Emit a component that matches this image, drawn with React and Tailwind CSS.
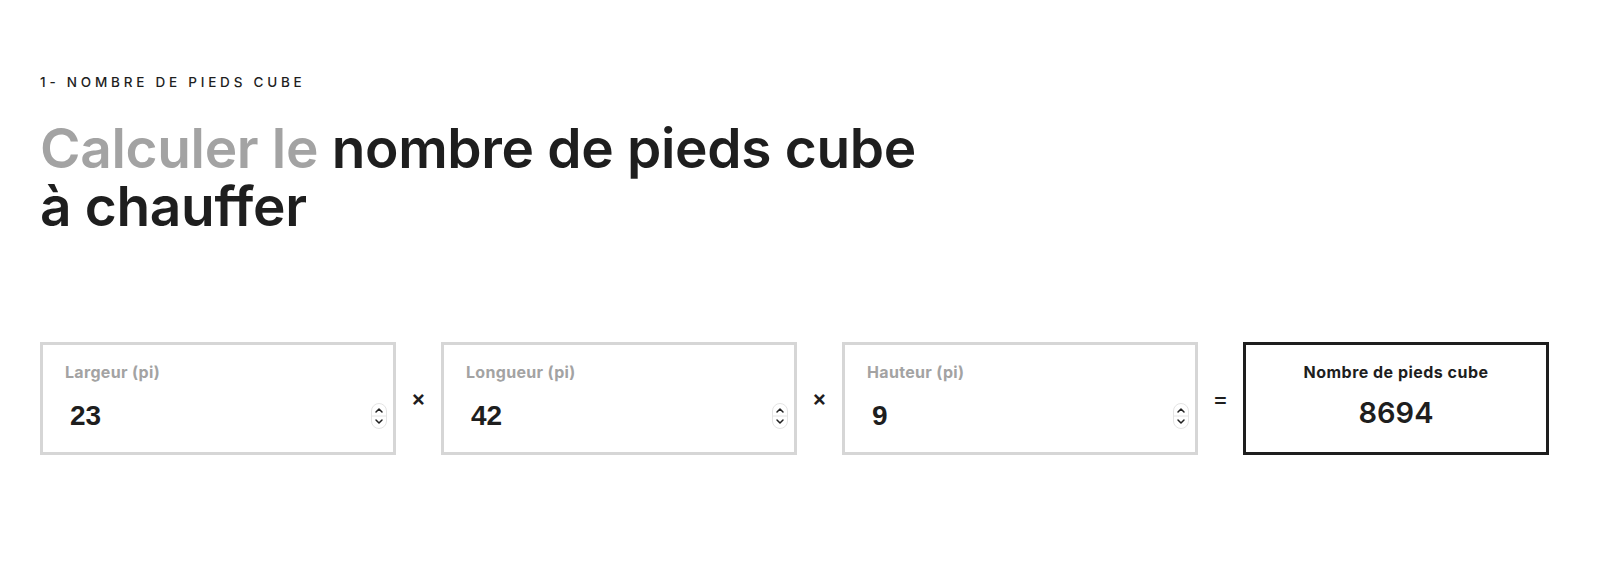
import React from "react";

const font = { fontFamily: "Inter, 'Noto Sans', sans-serif" };

function Spinner() {
  return (
    <svg width="16" height="26" viewBox="0 0 16 26" className="shrink-0">
      <rect x="0.5" y="0.5" width="15" height="25" rx="7.5" fill="#fff" stroke="#e4e4e4" />
      <line x1="1" y1="13" x2="15" y2="13" stroke="#e4e4e4" />
      <path d="M5 9 L8 6 L11 9" fill="none" stroke="#222" strokeWidth="1.5" strokeLinecap="round" strokeLinejoin="round" />
      <path d="M5 17 L8 20 L11 17" fill="none" stroke="#222" strokeWidth="1.5" strokeLinecap="round" strokeLinejoin="round" />
    </svg>
  );
}

function Field({ label, value }) {
  return (
    <div className="w-[356px] h-[113px] shrink-0 border-[3px] border-[#d6d6d6] bg-white flex flex-col pt-[17px]">
      <div className="pl-[22px] text-[16px] leading-[20px] font-bold tracking-[0.02em] text-[#a3a3a3]" style={font}>
        {label}
      </div>
      <div className="mt-[18px] flex items-center h-[32px] pl-[27px] pr-[6px]">
        <span
          className="flex-1 text-[28px] leading-[32px] font-bold text-[#1e1e1e]"
          style={{ fontFamily: "'Liberation Sans', Arial, sans-serif" }}
        >
          {value}
        </span>
        <Spinner />
      </div>
    </div>
  );
}

function Op({ children, cls }) {
  return (
    <div className={"w-[45px] shrink-0 flex items-center justify-center text-[#1e1e1e] " + cls} style={font}>
      {children}
    </div>
  );
}

export default function App() {
  return (
    <div className="w-[1600px] h-[577px] bg-white pl-[40px] pt-[74px]" style={font}>
      <div className="text-[13.5px] leading-[16px] font-medium tracking-[0.28em] text-[#1e1e1e]">
        1- NOMBRE DE PIEDS CUBE
      </div>
      <h1 className="mt-[29px] text-[55px] leading-[58px] font-semibold tracking-[-0.006em] text-[#1e1e1e]">
        <span className="text-[#a3a3a3]">Calculer le</span> nombre de pieds cube
        <br />à chauffer
      </h1>
      <div className="mt-[107px] flex items-stretch">
        <Field label="Largeur (pi)" value="23" />
        <Op cls="text-[22px] font-semibold">×</Op>
        <Field label="Longueur (pi)" value="42" />
        <Op cls="text-[22px] font-semibold">×</Op>
        <Field label="Hauteur (pi)" value="9" />
        <Op cls="text-[24px] font-normal">=</Op>
        <div className="w-[306px] h-[113px] shrink-0 border-[3px] border-[#1e1e1e] flex flex-col items-center pt-[17px]">
          <div className="text-[16px] leading-[20px] font-bold tracking-[0.03em] text-[#1e1e1e]">Nombre de pieds cube</div>
          <div className="mt-[14px] text-[29px] leading-[34px] font-semibold text-[#1e1e1e]">8694</div>
        </div>
      </div>
    </div>
  );
}
